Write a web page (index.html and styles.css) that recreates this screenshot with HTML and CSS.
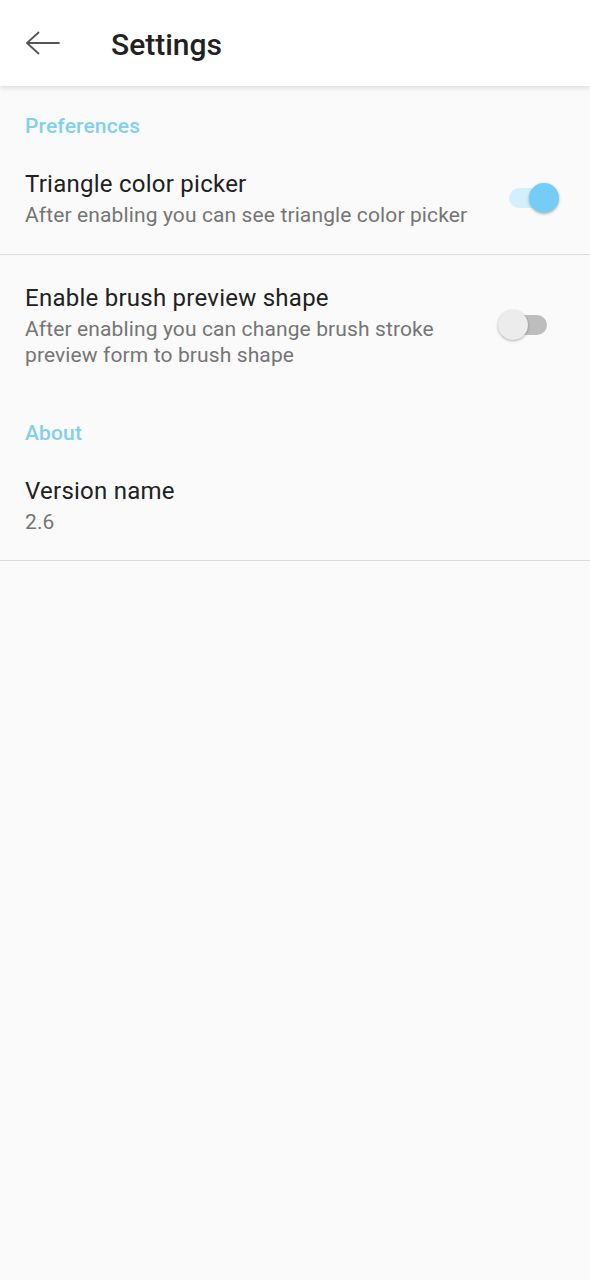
FILE: index.html
```html
<!DOCTYPE html>
<html>
<head>
<meta charset="utf-8">
<link rel="stylesheet" href="styles.css">
</head>
<body>
<header class="appbar">
  <svg class="back" width="36" height="26" viewBox="0 0 36 26">
    <path d="M1 12 H33 M1 12 L12.5 1.5 M1 12 L12.5 22.5" fill="none" stroke="#555" stroke-width="1.8" stroke-linecap="round"/>
  </svg>
  <h1 class="title">Settings</h1>
</header>
<main class="content">
  <div class="category">Preferences</div>
  <div class="item">
    <div class="texts">
      <div class="item-title">Triangle color picker</div>
      <div class="item-sub">After enabling you can see triangle color picker</div>
    </div>
    <div class="switch on"><span class="track"></span><span class="thumb"></span></div>
  </div>
  <div class="divider"></div>
  <div class="item item-after-divider item-tight">
    <div class="texts">
      <div class="item-title">Enable brush preview shape</div>
      <div class="item-sub narrow">After enabling you can change brush stroke preview form to brush shape</div>
    </div>
    <div class="switch off"><span class="track"></span><span class="thumb"></span></div>
  </div>
  <div class="category">About</div>
  <div class="item item-tight">
    <div class="texts">
      <div class="item-title">Version name</div>
      <div class="item-sub">2.6</div>
    </div>
  </div>
  <div class="divider"></div>
</main>
</body>
</html>
```
FILE: styles.css
```css
html, body {
  margin: 0;
  padding: 0;
  background: #fafafa;
  font-family: Roboto, "Liberation Sans", sans-serif;
}
.appbar {
  height: 86px;
  background: #ffffff;
  display: flex;
  align-items: center;
  box-shadow: 0 2px 5px rgba(0,0,0,0.12);
  position: relative;
  z-index: 1;
}
.back {
  margin-left: 26px;
  margin-top: 2px;
  flex: none;
}
.title {
  margin: 4px 0 0 49px;
  font-size: 30px;
  font-weight: 500;
  color: #212121;
  line-height: 36px;
}
.content {
  display: flex;
  flex-direction: column;
}
.category {
  padding: 28px 25px 4px;
  font-size: 21px;
  line-height: 24px;
  font-weight: 500;
  letter-spacing: 0.15px;
  color: #80d0ee;
}
.item {
  display: flex;
  align-items: center;
  padding: 28px 30px 26px 25px;
}
.item-after-divider {
  padding-top: 29px;
}
.item-tight {
  padding-bottom: 25px;
}
.texts {
  flex: 1;
  min-width: 0;
}
.item-title {
  font-size: 24px;
  line-height: 28px;
  letter-spacing: 0.25px;
  color: #212121;
}
.item-sub {
  margin-top: 4px;
  font-size: 21px;
  line-height: 26px;
  letter-spacing: 0.12px;
  color: #757575;
}
.item-sub.narrow {
  max-width: 450px;
}
.divider {
  height: 1px;
  background: #dcdcdc;
}
.switch {
  position: relative;
  width: 64px;
  height: 32px;
  flex: none;
  margin-top: -2px;
}
.track {
  position: absolute;
  left: 13px;
  top: 6px;
  width: 38px;
  height: 20px;
  border-radius: 10px;
  background: #bdbdbd;
}
.thumb {
  position: absolute;
  top: 1px;
  width: 30px;
  height: 30px;
  border-radius: 50%;
  background: #ececec;
  box-shadow: 0 1px 3px rgba(0,0,0,0.3);
}
.switch.on .track {
  background: #d3effb;
}
.switch.on .thumb {
  left: 33px;
  background: #74cdf4;
}
.switch.off .thumb {
  left: 2px;
}
```
